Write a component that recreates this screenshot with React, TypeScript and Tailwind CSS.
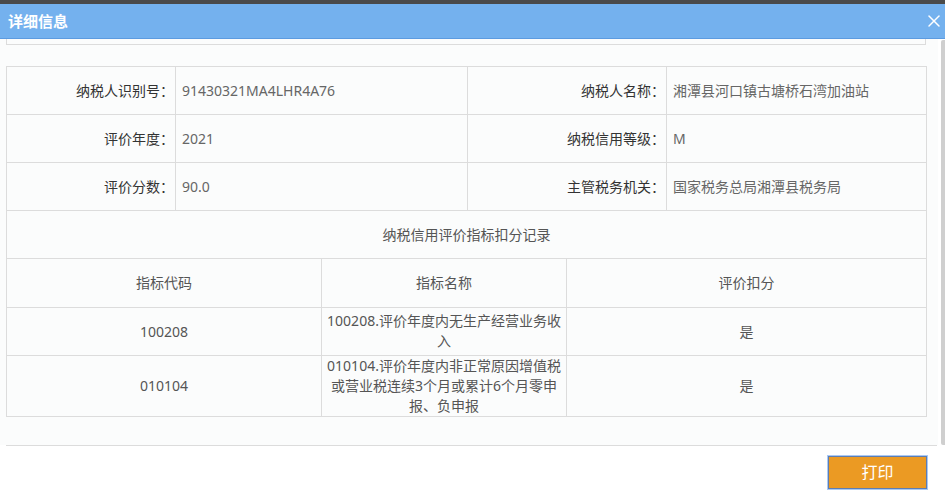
import { X } from 'lucide-react'

const font = { fontFamily: '"Noto Sans", "Noto Sans CJK SC", "Microsoft YaHei", sans-serif' }

const infoRows = [
  ['纳税人识别号：', '91430321MA4LHR4A76', '纳税人名称：', '湘潭县河口镇古塘桥石湾加油站'],
  ['评价年度：', '2021', '纳税信用等级：', 'M'],
  ['评价分数：', '90.0', '主管税务机关：', '国家税务总局湘潭县税务局'],
]

const records = [
  { code: '100208', name: ['100208.评价年度内无生产经营业务收', '入'], deduct: '是' },
  {
    code: '010104',
    name: ['010104.评价年度内非正常原因增值税', '或营业税连续3个月或累计6个月零申', '报、负申报'],
    deduct: '是',
  },
]

export default function App() {
  return (
    <div className="w-[945px] h-[494px] overflow-hidden bg-white flex flex-col text-[14px]" style={font}>
      <div className="h-[4px] bg-[#4a4a4a] shrink-0" />

      {/* header */}
      <div className="h-[35px] shrink-0 bg-[#74b1ee] border-b border-[#5c9be0] flex items-center justify-between pl-[8px] pr-[1px]">
        <span className="text-white font-bold text-[15px] leading-none">详细信息</span>
        <X className="w-[20px] h-[20px] text-white" strokeWidth={1.8} />
      </div>

      {/* body */}
      <div className="flex shrink-0">
        <div className="w-[938px] bg-[#fbfcfc] pl-[6px] pb-[28px]">
          <div className="w-[920px] h-[6px] border-x border-b border-[#dcdcdc]" />

          <table className="mt-[21px] w-[920px] table-fixed border-collapse">
            <colgroup>
              <col className="w-[169px]" />
              <col className="w-[292px]" />
              <col className="w-[199px]" />
              <col className="w-[260px]" />
            </colgroup>
            <tbody>
              {infoRows.map((r, i) => (
                <tr key={i} className="h-[48px]">
                  <td className="border border-[#dcdcdc] text-right text-[#333] pr-[1px]">{r[0]}</td>
                  <td className="border border-[#dcdcdc] text-[#666] pl-[6px]">{r[1]}</td>
                  <td className="border border-[#dcdcdc] text-right text-[#333] pr-[1px]">{r[2]}</td>
                  <td className="border border-[#dcdcdc] text-[#666] pl-[6px]">{r[3]}</td>
                </tr>
              ))}
              <tr className="h-[48px]">
                <td colSpan={4} className="border border-[#dcdcdc] text-center text-[#555]">
                  纳税信用评价指标扣分记录
                </td>
              </tr>
            </tbody>
          </table>

          <table className="w-[920px] table-fixed border-collapse">
            <colgroup>
              <col className="w-[315px]" />
              <col className="w-[245px]" />
              <col className="w-[360px]" />
            </colgroup>
            <tbody>
              <tr className="h-[48px]">
                <td className="border border-t-0 border-[#dcdcdc] text-center text-[#555]">指标代码</td>
                <td className="border border-t-0 border-[#dcdcdc] text-center text-[#555]">指标名称</td>
                <td className="border border-t-0 border-[#dcdcdc] text-center text-[#555]">评价扣分</td>
              </tr>
              {records.map(rec => (
                <tr key={rec.code} className={rec.name.length > 2 ? 'h-[61px]' : 'h-[48px]'}>
                  <td className="border border-[#dcdcdc] text-center text-[#555]">{rec.code}</td>
                  <td className="border border-[#dcdcdc] text-center text-[#555] leading-[20px] px-0 whitespace-nowrap">
                    {rec.name.map((line, i) => (
                      <div key={i}>{line}</div>
                    ))}
                  </td>
                  <td className="border border-[#dcdcdc] text-center text-[#555]">{rec.deduct}</td>
                </tr>
              ))}
            </tbody>
          </table>
        </div>
        {/* scrollbar */}
        <div className="flex-1 bg-white flex justify-end pt-[1px]">
          <div className="w-[4px] bg-[#cfcfcf] rounded-l-[2px]" />
        </div>
      </div>

      {/* footer */}
      <div className="ml-[6px] w-[931px] border-t border-[#dcdcdc]" />
      <div className="flex-1 flex justify-end pr-[18px] pt-[10px]">
        <button className="w-[99px] h-[33px] bg-[#eb9a23] border border-[#5d7db3] ring-1 ring-[#a9c9f4] text-white text-[16px] leading-none">
          打印
        </button>
      </div>
    </div>
  )
}
